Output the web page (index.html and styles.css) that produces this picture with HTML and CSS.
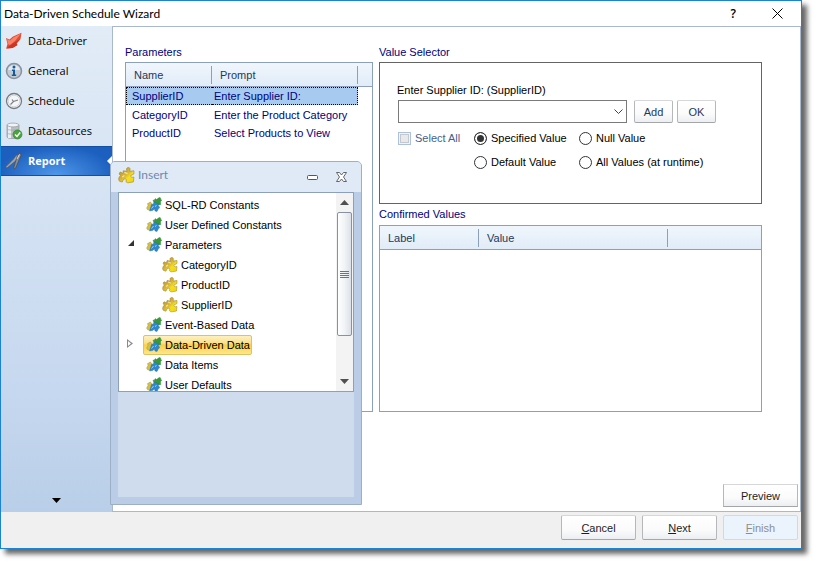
FILE: index.html
```
<!DOCTYPE html>
<html lang="en">
<head>
    <meta charset="UTF-8">
    <meta name="viewport" content="width=device-width, initial-scale=1.0">
    <title>Data-Driven Schedule Wizard</title>
    <link rel="stylesheet" href="styles.css">
</head>
<body>
    <!-- Shared icons -->
    <svg class="icon-defs" aria-hidden="true">
        <defs>
            <linearGradient id="gold" x1="0" y1="0" x2="1" y2="1">
                <stop offset="0" stop-color="#b08f2c"/>
                <stop offset=".5" stop-color="#dcb93a"/>
                <stop offset=".65" stop-color="#f5e01c"/>
                <stop offset="1" stop-color="#efd60e"/>
            </linearGradient>
            <symbol id="piece" viewBox="0 0 16 16">
                <path d="M5 3.500 8.500 4C7.500 2 8 .5 9.800.500c1.700 0 2 1.700 1.200 3.500l4-.5v3l-3 1.500c-.5 1.500 1 2 3 1.500l-.5 4.500-4.500.8c-1 .2-2.500-.3-2.500-1.500L8 12c-1-1-2.500-1-3 0l-1 2.200-2.500-.7C.300 12.500.500 10 1.500 9l1-1C.800 7.500.800 5 2.500 4.800L4.500 6z" fill="url(#gold)" stroke="#97792a" stroke-width=".5"/>
                <path d="M6 5l3 1.200M4 9.500 6 8" stroke="#f6e68c" stroke-width="1.200" fill="none"/>
            </symbol>
            <symbol id="pieces" viewBox="0 0 16 16">
                <path d="M7 3 8.500 3.500C8.500 1.500 9.500 1 10.500 2.500L12 1.500C13-.2 15 .3 14.600 2l1.200 1.200-1.300 1.300.2 3.200L11 8 8 6z" fill="#38983a" stroke="#2b8030" stroke-width=".4"/>
                <path d="M1.500 6.500 3 6C3.500 4.500 5 4.800 5 6l1.500 1L5 12l-1.500 1C1.500 13.500.500 12 .800 10.500L2 8.500z" fill="#d6bf45" stroke="#a08d3a" stroke-width=".4"/>
                <path d="M5.500 7.500 7.500 7C7.300 5 9.500 4.500 10 6l2.500.5-.3 2.500c1.800.3 1.800 2.500.3 2.500L11 14.500 9 14l-.5-2-2 1.500-3 .5L4.500 11z" fill="#2f87cc" stroke="#27699f" stroke-width=".4"/>
                <path d="m5.500 11.500 2-2.500m1.500.5 1.500-1" stroke="#a3d5f2" fill="none"/>
            </symbol>
        </defs>
    </svg>

    <div class="window">
        <header class="titlebar">
            <h1>Data-Driven Schedule Wizard</h1>
            <div class="titlebar-buttons">
                <button type="button" aria-label="Help">?</button>
                <button type="button" aria-label="Close">
                    <svg width="11" height="11" viewBox="0 0 11 11"><path d="M.5.500l10 10m0-10l-10 10" stroke="#000" fill="none"/></svg>
                </button>
            </div>
        </header>

        <div class="body">
            <!-- Steps -->
            <nav class="sidebar">
                <ul>
                    <li><a href="#">
                        <svg class="nav-icon" viewBox="0 0 18 18"><path d="M1 6 4.500 7.500 8 4.500 16.500.800 15.500 7 11.500 11.500l1 1.500L7.500 16 1.200 16.500 2.500 12z" fill="#e34a32"/><path d="M2 7l3 1.500L9 5l7-3.500L10 9l-5 4-2-1z" fill="#f98268"/><path d="M1.200 16.500 5 13.500 10 10l5.500-3-4 4.500 1 1.500L7.500 16z" fill="#cf3423"/></svg>
                        Data-Driver</a></li>
                    <li><a href="#">
                        <svg class="nav-icon" viewBox="0 0 18 18"><circle cx="9" cy="9" r="7.500" fill="#c3ccd5" stroke="#87929d" stroke-width="1.500"/><path d="M3 8a6.200 6.200 0 0 1 12 0z" fill="#e3e9ee"/><circle cx="9" cy="5" r="1.500" fill="#165a9c"/><path d="M7 7.500h3v5h1.200V14H6.800v-1.500H8V9H7z" fill="#165a9c"/></svg>
                        General</a></li>
                    <li><a href="#">
                        <svg class="nav-icon" viewBox="0 0 18 18"><circle cx="9" cy="9" r="7.500" fill="#f5f6f7" stroke="#777c82" stroke-width="1.300"/><circle cx="9" cy="9" r="5.800" fill="none" stroke="#d5d8db"/><path d="M5.500 12.500 8.500 9.500 13 8M8.500 9.500 7 7.500" fill="none" stroke="#7c8187" stroke-width="1.200"/></svg>
                        Schedule</a></li>
                    <li><a href="#">
                        <svg class="nav-icon" viewBox="0 0 18 18"><path d="M2 3v12c0 2 12 2 12 0V3z" fill="#b9bfc5" stroke="#8e969e" stroke-width=".7"/><path d="M4.500 4v12" stroke="#eceff1" stroke-width="3"/><ellipse cx="8" cy="3" rx="6" ry="1.900" fill="#f1f3f4" stroke="#8e969e" stroke-width=".7"/><path d="M2 7c0 1.500 12 1.500 12 0M2 11c0 1.500 12 1.500 12 0" fill="none" stroke="#9da4ab" stroke-width=".7"/><circle cx="12.500" cy="12.500" r="4.500" fill="#4ba43c" stroke="#2f7d2b" stroke-width=".6"/><path d="m10 12.500 2 2 3.200-4" fill="none" stroke="#fff" stroke-width="1.500"/></svg>
                        Datasources</a></li>
                    <li><a href="#" class="active" aria-current="step">
                        <svg class="nav-icon" viewBox="0 0 18 18"><path d="M15.500 1 11 3.500 8.500 7 1 14.500.8 16l1.700-.4L10 9.500 15 5z" fill="#9da3aa" stroke="#50565c" stroke-width=".7"/><path d="M15.500 1 13 2.500 11 8 8.800 15.500 9.500 17l1.300-1.200L14 8l2-4.500z" fill="#868d95" stroke="#454b52" stroke-width=".7"/><path d="M14.500 2.500 12 7" stroke="#d5d9dd"/></svg>
                        Report</a></li>
                </ul>
                <button type="button" class="more" aria-label="More steps">
                    <svg width="9" height="5" viewBox="0 0 9 5"><path d="M0 0h9L4.500 5z"/></svg>
                </button>
            </nav>

            <main class="content">
                <div class="panels">
                    <section class="panel">
                        <h2>Parameters</h2>
                        <div class="list">
                            <table class="parameters">
                                <colgroup><col class="col-name"><col class="col-prompt"><col></colgroup>
                                <thead>
                                    <tr><th scope="col"><span>Name</span></th><th scope="col"><span>Prompt</span></th><td></td></tr>
                                </thead>
                                <tbody>
                                    <tr class="selected"><td>SupplierID</td><td>Enter Supplier ID:</td><td></td></tr>
                                    <tr><td>CategoryID</td><td>Enter the Product Category</td><td></td></tr>
                                    <tr><td>ProductID</td><td>Select Products to View</td><td></td></tr>
                                </tbody>
                            </table>
                        </div>
                    </section>

                    <div class="values">
                        <section class="panel">
                            <h2>Value Selector</h2>
                            <form class="selector">
                                <label for="supplier">Enter Supplier ID: (SupplierID)</label>
                                <div class="entry">
                                    <div class="combo">
                                        <select id="supplier"><option></option></select>
                                        <svg width="9" height="5" viewBox="0 0 9 5"><path d="M.5.500l4 4 4-4" stroke="#444" fill="none"/></svg>
                                    </div>
                                    <button type="button" class="btn small">Add</button>
                                    <button type="button" class="btn small">OK</button>
                                </div>
                                <div class="options">
                                    <label class="disabled"><input type="checkbox" disabled>Select All</label>
                                    <label><input type="radio" name="mode" checked>Specified Value</label>
                                    <label><input type="radio" name="mode">Null Value</label>
                                    <label class="second"><input type="radio" name="mode">Default Value</label>
                                    <label><input type="radio" name="mode">All Values (at runtime)</label>
                                </div>
                            </form>
                        </section>

                        <section class="panel confirmed-panel">
                            <h2>Confirmed Values</h2>
                            <div class="list">
                                <table class="confirmed">
                                    <colgroup><col class="col-label"><col class="col-value"><col></colgroup>
                                    <thead>
                                        <tr><th scope="col"><span>Label</span></th><th scope="col"><span>Value</span></th><td></td></tr>
                                    </thead>
                                </table>
                            </div>
                        </section>
                    </div>
                </div>
                <button type="button" class="btn square">Preview</button>
            </main>
        </div>

        <footer class="footer">
            <button type="button" class="btn"><u>C</u>ancel</button>
            <button type="button" class="btn"><u>N</u>ext</button>
            <button type="button" class="btn" disabled><u>F</u>inish</button>
        </footer>

        <!-- Floating insert palette -->
        <aside class="insert">
            <div class="insert-title">
                <svg class="insert-icon"><use href="#piece"/></svg>
                <h2>Insert</h2>
                <button type="button" aria-label="Minimize">
                    <svg width="11" height="5" viewBox="0 0 11 5"><rect x=".5" y=".5" width="10" height="4" rx="1" fill="#fff" stroke="#54565e"/></svg>
                </button>
                <button type="button" aria-label="Close palette">
                    <svg width="11" height="10" viewBox="0 0 11 10"><path d="M.5.500h3l2 2.500 2-2.500h3L7.500 5l3 4.500h-3l-2-2.500-2 2.500h-3L3.500 5z" fill="#fff" stroke="#54565e" stroke-width=".9"/></svg>
                </button>
            </div>
            <div class="insert-body">
                <div class="tree">
                    <ul class="tree-items">
                        <li><span><svg><use href="#pieces"/></svg>SQL-RD Constants</span></li>
                        <li><span><svg><use href="#pieces"/></svg>User Defined Constants</span></li>
                        <li class="open"><span><svg><use href="#pieces"/></svg>Parameters</span>
                            <ul>
                                <li><span><svg><use href="#piece"/></svg>CategoryID</span></li>
                                <li><span><svg><use href="#piece"/></svg>ProductID</span></li>
                                <li><span><svg><use href="#piece"/></svg>SupplierID</span></li>
                            </ul>
                        </li>
                        <li><span><svg><use href="#pieces"/></svg>Event-Based Data</span></li>
                        <li class="closed"><span class="current"><svg><use href="#pieces"/></svg>Data-Driven Data</span></li>
                        <li><span><svg><use href="#pieces"/></svg>Data Items</span></li>
                        <li><span><svg><use href="#pieces"/></svg>User Defaults</span></li>
                    </ul>
                    <div class="scrollbar">
                        <svg width="9" height="5" viewBox="0 0 9 5"><path d="M0 5h9L4.500 0z" fill="#505050"/></svg>
                        <div class="thumb"><i></i><i></i><i></i><i></i></div>
                        <svg width="9" height="5" viewBox="0 0 9 5"><path d="M0 0h9L4.500 5z" fill="#505050"/></svg>
                    </div>
                </div>
            </div>
        </aside>
    </div>
</body>
</html>
```
FILE: styles.css
```
:root {
    --accent: #1883d7;
    --line: #8ba0bc;
    --soft-line: #a9b8cc;
    --navy: #000080;
    --header-text: #1e395b;
}

* {
    margin: 0;
    padding: 0;
    box-sizing: border-box;
}

body {
    background: #fff;
    height: 100vh;
    padding: 0 15px 15px 0;
    font: 11px/16px "Liberation Sans", Arial, sans-serif;
    color: #000;
}

ul {
    list-style: none;
}

button,
select,
input {
    font: inherit;
    color: inherit;
}

h1,
h2 {
    font-size: inherit;
    font-weight: normal;
}

.icon-defs {
    position: absolute;
    width: 0;
    height: 0;
}

/* Window */
.window {
    position: relative;
    display: flex;
    flex-direction: column;
    height: 100%;
    border: 1px solid var(--accent);
    box-shadow: 5px 5px 5px rgba(0, 0, 0, 0.6);
    background: #fff;
}

.titlebar {
    display: flex;
    justify-content: space-between;
    align-items: center;
    height: 25px;
    padding: 0 18px 0 3px;
    font: 12px/24px Lato, "Open Sans", sans-serif;
}

.titlebar-buttons {
    display: flex;
    gap: 36px;
}

.titlebar-buttons button {
    display: flex;
    align-items: center;
    border: none;
    background: none;
    font-family: "Open Sans", sans-serif;
    font-weight: 600;
    line-height: 24px;
}

.body {
    flex: 1;
    display: flex;
    min-height: 0;
}

/* Steps sidebar */
.sidebar {
    display: flex;
    flex-direction: column;
    justify-content: space-between;
    width: 111px;
    padding-bottom: 9px;
    background: linear-gradient(#e2ecf7, #c6d8ef 75%, #b9cee8);
    font: 11px/30px "Open Sans", "Noto Sans", sans-serif;
}

.sidebar a {
    position: relative;
    display: flex;
    align-items: center;
    gap: 5px;
    height: 30px;
    padding-left: 4px;
    color: #000;
    text-decoration: none;
}

.sidebar a.active {
    border: 1px solid #144fa3;
    border-width: 1px 0;
    background: radial-gradient(ellipse at 50% 100%, #4e97ea, #1c5fbe 75%);
    color: #fff;
    font-weight: bold;
}

.sidebar a.active::after {
    content: '';
    position: absolute;
    right: 0;
    top: 9px;
    border: 5px solid transparent;
    border-right-color: #fff;
    border-left: none;
}

.nav-icon {
    width: 18px;
    height: 18px;
}

.more {
    display: flex;
    justify-content: center;
    border: none;
    background: none;
    line-height: 8px;
}

/* Content */
.content {
    flex: 1;
    display: flex;
    flex-direction: column;
    align-items: flex-end;
    border: 1px solid var(--soft-line);
    padding: 17px 2px 4px 11px;
}

.panels {
    flex: 1;
    align-self: stretch;
    display: grid;
    grid-template-columns: 248px 1fr;
    gap: 6px;
    margin: 0 36px 72px 1px;
}

.values {
    display: flex;
    flex-direction: column;
    gap: 2px;
}

.panel {
    display: flex;
    flex-direction: column;
    gap: 2px;
}

.panel h2 {
    color: var(--navy);
}

.confirmed-panel {
    flex: 1;
    gap: 3px;
}

.list {
    flex: 1;
    border: 1px solid var(--line);
}

table {
    width: 100%;
    table-layout: fixed;
    border-collapse: separate;
    border-spacing: 0;
    color: var(--navy);
}

.col-name {
    width: 86px;
}

.col-prompt {
    width: 146px;
}

.col-label {
    width: 99px;
}

.col-value {
    width: 189px;
}

thead th,
thead td {
    height: 24px;
    border-bottom: 1px solid var(--line);
    background: linear-gradient(#f0f6fc, #e1ecf8);
    color: var(--header-text);
    font-weight: normal;
    text-align: left;
}

thead span {
    display: block;
    padding-left: 8px;
    border-right: 1px solid var(--line);
    line-height: 18px;
}

tbody td {
    height: 18px;
    padding: 1px 0 0 6px;
    line-height: 16px;
    white-space: nowrap;
}

tbody td:nth-child(2) {
    padding-left: 2px;
}

.selected td:not(:last-child) {
    border: 1px dotted #000;
    border-width: 1px 0;
    padding-top: 0;
    background: #a6caf0;
}

.selected td:first-child {
    border-left-width: 1px !important;
    padding-left: 5px;
}

.selected td:nth-child(2) {
    border-right-width: 1px !important;
}

/* Value selector */
.selector {
    height: 142px;
    padding: 19px 17px;
    border: 1px solid #646464;
}

.entry {
    display: flex;
    gap: 4px;
    margin: 2px 0 3px 1px;
}

.combo {
    display: grid;
    align-items: center;
    width: 229px;
    margin-right: 3px;
}

.combo select {
    grid-area: 1 / 1;
    width: 100%;
    height: 23px;
    border: 1px solid #7a7a7a;
    background: #fff;
    appearance: none;
}

.combo svg {
    grid-area: 1 / 1;
    justify-self: end;
    margin-right: 4px;
    pointer-events: none;
}

.options {
    display: grid;
    grid-template-columns: 76px 105px 1fr;
    grid-auto-rows: 24px;
    margin-left: 1px;
}

.options label {
    display: flex;
    align-items: center;
    gap: 4px;
    white-space: nowrap;
}

.options .second {
    grid-column: 2;
}

.options .disabled {
    color: #46618a;
}

.options input {
    width: 13px;
    height: 13px;
    border: 1px solid #333;
    background: #fff;
    appearance: none;
}

.options input[type="radio"] {
    border-radius: 50%;
}

.options input[type="radio"]:checked {
    background: #333;
    box-shadow: inset 0 0 0 2px #fff;
}

.options input[type="checkbox"] {
    border-color: #abc1de;
    background: #e9e9ea;
    box-shadow: inset 0 0 0 1px #f4f4f4, inset 0 0 0 2px #c5c9cf;
}

/* Buttons */
.btn {
    width: 75px;
    height: 25px;
    border: 1px solid #d5d7da;
    border-bottom-color: #a3a6aa;
    border-right-color: #b4b7bb;
    border-left-color: #b4b7bb;
    border-radius: 2px;
    background: linear-gradient(#fff, #fbfbfc 60%, #eceef1);
    color: #1e1e1e;
}

.btn.small {
    width: 39px;
    height: 23px;
    color: var(--header-text);
}

.btn.square {
    height: 23px;
    border-radius: 0;
}

.btn:disabled {
    border-color: #c9dcef;
    background: #ebf4fd;
    color: #8d8d8d;
}

.footer {
    display: flex;
    justify-content: flex-end;
    gap: 6px;
    padding: 3px 3px 8px;
    background: #f0f0f0;
}

/* Insert palette */
.insert {
    position: absolute;
    left: 109px;
    top: 160px;
    width: 252px;
    height: 344px;
    display: flex;
    flex-direction: column;
    border: 1px solid #9dafc6;
    border-radius: 5px 5px 0 0;
    background: #bbcde6;
}

.insert-title {
    display: flex;
    align-items: center;
    gap: 18px;
    height: 30px;
    padding: 0 14px 4px 7px;
    border-radius: 4px 4px 0 0;
    background: #dfeaf6;
    font: 12px/24px Lato, "Open Sans", sans-serif;
}

.insert-title h2 {
    flex: 1;
    margin-left: -15px;
    color: #7187ae;
}

.insert-title button {
    display: flex;
    align-items: center;
    padding-top: 4px;
    border: none;
    background: none;
}

.insert-icon {
    width: 17px;
    height: 17px;
}

.insert-body {
    flex: 1;
    margin: 0 7px 7px;
    background: #cfdcee;
}

.tree {
    display: flex;
    height: 200px;
    border: 1px solid var(--line);
    background: #fff;
    overflow: hidden;
}

.tree-items {
    flex: 1;
    padding: 2px 0 0 24px;
}

.tree-items ul {
    padding-left: 16px;
}

.tree-items li {
    position: relative;
}

.tree-items span {
    display: flex;
    align-items: center;
    gap: 3px;
    width: max-content;
    height: 20px;
    padding: 0 1px 0 2px;
    border: 1px solid transparent;
    border-radius: 2px;
}

.tree-items svg {
    width: 16px;
    height: 16px;
}

.tree-items .current {
    border-color: #e0c164;
    background: linear-gradient(#fdf1c0, #fbe08a 40%, #fbd044 50%, #fde78c);
}

.open::before {
    content: '';
    position: absolute;
    left: -15px;
    top: 5px;
    border: 3px solid #333;
    border-left-color: transparent;
    border-top-color: transparent;
}

/* Hollow arrow: a white triangle over a grey one */
.closed::before,
.closed::after {
    content: '';
    position: absolute;
    left: -16px;
    top: 4px;
    width: 6px;
    height: 9px;
    background: #8a8a8a;
    clip-path: polygon(0 0, 100% 50%, 0 100%);
}

.closed::after {
    left: -15px;
    top: 6px;
    width: 3px;
    height: 5px;
    background: #fff;
}

.scrollbar {
    display: flex;
    flex-direction: column;
    align-items: center;
    width: 17px;
    padding: 7px 1px;
    background: #f3f3f4;
}

.thumb {
    flex: 0 0 124px;
    display: flex;
    flex-direction: column;
    align-items: center;
    justify-content: center;
    gap: 1px;
    width: 15px;
    margin: 7px 0 43px;
    border: 1px solid #8791a0;
    border-radius: 2px;
    background: linear-gradient(to right, #fff, #f1f3f6 50%, #dce0e6);
}

.thumb i {
    width: 9px;
    height: 1px;
    background: #6a7380;
}
```
